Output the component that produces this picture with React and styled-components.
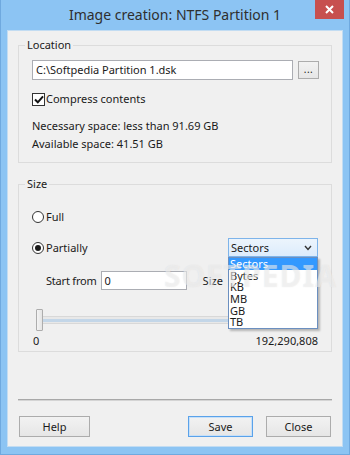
import React, { useState } from 'react';
import styled, { createGlobalStyle } from 'styled-components';

const GlobalStyle = createGlobalStyle`
  html, body { margin: 0; padding: 0; background: #ffffff; }
  * { box-sizing: border-box; }
`;

const Window = styled.div`
  width: 350px;
  height: 455px;
  background: #8cc4f3;
  border: 1px solid #6fa9df;
  border-top: none;
  padding: 0 6px 7px;
  display: flex;
  flex-direction: column;
  font-family: "Noto Sans", "Open Sans", sans-serif;
  font-size: 11px;
  color: #1a1a1a;
`;

const TitleBar = styled.div`
  height: 30px;
  display: grid;
  grid-template-columns: 40px 1fr 40px;
  align-items: start;
`;

const Title = styled.div`
  grid-column: 2;
  text-align: center;
  font-size: 14px;
  line-height: 29px;
  color: #2f2f2f;
`;

const CloseButton = styled.button`
  grid-column: 3;
  justify-self: end;
  width: 29px;
  height: 19px;
  margin-right: -1px;
  border: none;
  padding: 0;
  background: #c7504f;
  display: flex;
  align-items: center;
  justify-content: center;
`;

const Client = styled.div`
  position: relative;
  flex: 1;
  background: #f0f0f0;
  border: 1px solid #c2dcf2;
  padding: 7px 10px 0;
  display: flex;
  flex-direction: column;
`;

const Group = styled.fieldset`
  margin: ${({ $top }) => $top}px 0 0;
  padding: 0;
  border: 1px solid #dcdcdc;
  min-width: 0;
`;

const Legend = styled.legend`
  margin-left: 6px;
  padding: 0 2px;
  font-size: 11px;
  line-height: 14px;
  color: #1a1a1a;
`;

const GroupBody = styled.div`
  padding: ${({ $pad }) => $pad};
  display: flex;
  flex-direction: column;
`;

const Row = styled.div`
  display: flex;
  align-items: center;
  gap: ${({ $gap }) => $gap || 0}px;
  margin-top: ${({ $top }) => $top || 0}px;
  padding-left: ${({ $indent }) => $indent || 0}px;
  justify-content: ${({ $spread }) => ($spread ? 'space-between' : 'flex-start')};
`;

const TextInput = styled.div`
  height: ${({ $h }) => $h}px;
  width: ${({ $w }) => ($w ? `${$w}px` : 'auto')};
  flex: ${({ $w }) => ($w ? 'none' : '1')};
  background: #ffffff;
  border: 1px solid #abadb3;
  padding: 0 3px;
  display: flex;
  align-items: center;
  line-height: 14px;
`;

const Button = styled.button`
  font-family: inherit;
  font-size: 11px;
  color: #1a1a1a;
  height: ${({ $h }) => $h || 21}px;
  width: ${({ $w }) => $w}px;
  padding: 0;
  background: linear-gradient(#f2f2f2, #e6e6e6);
  border: 1px solid ${({ $default }) => ($default ? '#5aa2ea' : '#acacac')};
  box-shadow: ${({ $default }) => ($default ? 'inset 0 0 0 1px #c7e0f8' : 'none')};
  display: flex;
  align-items: center;
  justify-content: center;
`;

const Dots = styled.span`
  letter-spacing: 0.5px;
  font-size: 10px;
  margin-top: -2px;
`;

const Check = styled.span`
  width: 13px;
  height: 13px;
  background: #ffffff;
  border: 1px solid #333333;
  display: flex;
  align-items: center;
  justify-content: center;
`;

const Radio = styled.span`
  width: 12px;
  height: 12px;
  border-radius: 50%;
  background: #ffffff;
  border: 1px solid #333333;
  display: flex;
  align-items: center;
  justify-content: center;

  &::after {
    content: '';
    width: 6px;
    height: 6px;
    border-radius: 50%;
    background: ${({ $on }) => ($on ? '#1a1a1a' : 'transparent')};
  }
`;

const Label = styled.span`
  line-height: 14px;
  white-space: nowrap;
  flex: none;
  letter-spacing: ${({ $tight }) => ($tight ? '-0.2px' : 'normal')};
  margin-left: ${({ $ml }) => $ml || 0}px;
`;

const InfoLine = styled.div`
  line-height: 18px;
`;

const SelectWrap = styled.div`
  position: relative;
  width: 90px;
`;

const SelectBox = styled.div`
  height: 19px;
  border: 1px solid #7eb4ea;
  background: linear-gradient(#ecf4fc, #dcecfc);
  display: flex;
  align-items: center;
  justify-content: space-between;
  padding: 0 5px 0 2px;
`;

const DropList = styled.ul`
  position: absolute;
  top: 19px;
  left: 0;
  width: 90px;
  margin: 0;
  padding: 0;
  list-style: none;
  background: #ffffff;
  border: 1px solid #6b8fc0;
  box-shadow: 2px 2px 2px rgba(0, 0, 0, 0.25);
  z-index: 2;
`;

const DropItem = styled.li`
  height: 11.7px;
  line-height: 11.7px;
  padding-left: 1px;
  background: ${({ $active }) => ($active ? '#3399ff' : 'transparent')};
  color: ${({ $active }) => ($active ? '#ffffff' : '#1a1a1a')};
`;

const Slider = styled.div`
  display: flex;
  align-items: center;
  margin: 19px 13px 0 4px;
  height: 22px;
`;

const Thumb = styled.div`
  width: 7px;
  height: 22px;
  background: linear-gradient(90deg, #f4f4f4, #e4e4e4);
  border: 1px solid #adadad;
  border-radius: 1px;
`;

const Track = styled.div`
  flex: 1;
  height: 8px;
  border-top: 1px solid #d8d8d8;
  border-bottom: 1px solid #d8d8d8;
  background: linear-gradient(#e8e8e8 0 25%, #c3d6e8 25% 75%, #e8e8e8 75%);
`;

const Scale = styled.div`
  display: flex;
  justify-content: space-between;
  margin: 3px 13px 0 1px;
  line-height: 14px;
`;

const Separator = styled.div`
  margin-top: 47px;
  height: 2px;
  border-top: 1px solid #a8a8a8;
  border-bottom: 1px solid #d4d4d4;
`;

const ButtonBar = styled.div`
  display: flex;
  margin-top: 15px;
  padding: 0 1px;
  gap: 13px;

  & > :first-child { margin-right: auto; }
`;

const Watermark = styled.div`
  position: absolute;
  left: 156px;
  top: 224px;
  font-size: 30px;
  font-weight: 700;
  letter-spacing: 1px;
  color: rgba(255, 255, 255, 0.45);
  text-shadow: 0 0 1px rgba(180, 180, 180, 0.35);
  pointer-events: none;
  z-index: 3;
`;

const units = ['Sectors', 'Bytes', 'KB', 'MB', 'GB', 'TB'];

export default function App() {
  const [unit] = useState('Sectors');

  return (
    <>
      <GlobalStyle />
      <Window>
        <TitleBar>
          <Title>Image creation: NTFS Partition 1</Title>
          <CloseButton aria-label="Close">
            <svg width="9" height="9" viewBox="0 0 9 9">
              <path d="M1 1L8 8M8 1L1 8" stroke="#ffffff" strokeWidth="2" />
            </svg>
          </CloseButton>
        </TitleBar>

        <Client>
          <Group $top={0}>
            <Legend>Location</Legend>
            <GroupBody $pad="8px 12px 9px 13px">
              <Row $gap={5}>
                <TextInput $h={20}>C:\Softpedia Partition 1.dsk</TextInput>
                <Button $w={21} $h={18}><Dots>...</Dots></Button>
              </Row>
              <Row $top={12} $gap={1}>
                <Check>
                  <svg width="10" height="9" viewBox="0 0 10 9">
                    <path d="M1 4.5L3.8 7.3L9 1.3" fill="none" stroke="#111" strokeWidth="2" />
                  </svg>
                </Check>
                <Label>Compress contents</Label>
              </Row>
              <InfoLine style={{ marginTop: 11 }}>Necessary space: less than 91.69 GB</InfoLine>
              <InfoLine>Available space: 41.51 GB</InfoLine>
            </GroupBody>
          </Group>

          <Group $top={14}>
            <Legend>Size</Legend>
            <GroupBody $pad="19px 0 3px 13px">
              <Row $gap={2}>
                <Radio />
                <Label>Full</Label>
              </Row>
              <Row $top={14} $spread style={{ paddingRight: 13 }}>
                <Row $gap={2}>
                  <Radio $on />
                  <Label>Partially</Label>
                </Row>
                <SelectWrap>
                  <SelectBox>
                    <span>{unit}</span>
                    <svg width="8" height="6" viewBox="0 0 8 6">
                      <path d="M1 1L4 4.5L7 1" fill="none" stroke="#333" strokeWidth="1.4" />
                    </svg>
                  </SelectBox>
                  <DropList>
                    {units.map((u) => (
                      <DropItem key={u} $active={u === unit}>{u}</DropItem>
                    ))}
                  </DropList>
                </SelectWrap>
              </Row>
              <Row $top={14} $indent={14} $gap={4}>
                <Label $tight>Start from</Label>
                <TextInput $h={19} $w={86}>0</TextInput>
                <Label $ml={12}>Size</Label>
              </Row>
              <Slider>
                <Thumb />
                <Track />
              </Slider>
              <Scale>
                <span>0</span>
                <span>192,290,808</span>
              </Scale>
            </GroupBody>
          </Group>

          <Separator />
          <ButtonBar>
            <Button $w={71}>Help</Button>
            <Button $w={65} $default>Save</Button>
            <Button $w={65}>Close</Button>
          </ButtonBar>

          <Watermark>SOFTPEDIA</Watermark>
        </Client>
      </Window>
    </>
  );
}
